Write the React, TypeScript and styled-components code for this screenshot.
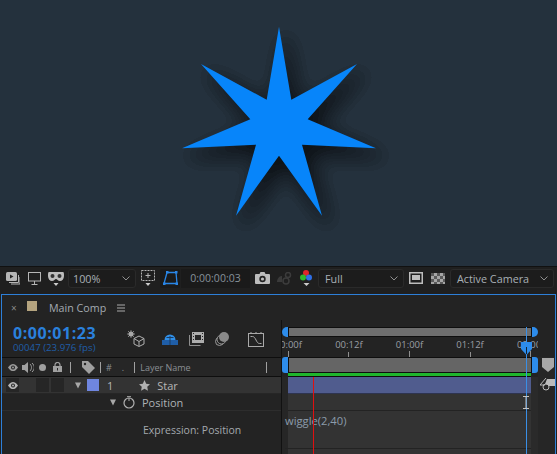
import React from "react";
import styled, { createGlobalStyle } from "styled-components";

const FONT = `"Open Sans", "Noto Sans", "Liberation Sans", sans-serif`;
const STAR =
  "279,26.7 291.3,99.7 357,64 307.7,119.3 376,148.3 302,144.7 322,215.7 279,155.7 236,215.7 256,144.7 182,148.3 250.3,119.3 201,64 266.7,99.7";

const Global = createGlobalStyle`
  html, body { margin: 0; padding: 0; background: #1f1f1f; overflow: hidden; }
  #root { width: 557px; height: 454px; overflow: hidden; }
  * { box-sizing: border-box; }
`;

const Page = styled.div`
  width: 557px;
  height: 454px;
  display: flex;
  flex-direction: column;
  background: #1f1f1f;
  font-family: ${FONT};
  font-size: 11px;
  color: #a9aeb3;
  overflow: hidden;
`;
const Viewer = styled.div`
  height: 267px;
  flex: none;
  background: #24313d;
  border-bottom: 1px solid #111;
`;
const Canvas = styled.svg`
  display: block;
`;
const Toolbar = styled.div`
  height: 27px;
  flex: none;
  display: flex;
  align-items: center;
  padding-bottom: 5px;
  background: #1f1f1f;
`;
const ToolSlot = styled.span<{ $ml: number; $w: number }>`
  flex: none;
  display: flex;
  align-items: center;
  justify-content: center;
  margin-left: ${(p) => p.$ml}px;
  width: ${(p) => p.$w}px;
`;
const Dropdown = styled.div<{ $ml: number; $w: number; $pl: number }>`
  flex: none;
  display: flex;
  align-items: center;
  justify-content: space-between;
  height: 19px;
  margin-left: ${(p) => p.$ml}px;
  width: ${(p) => p.$w}px;
  padding: 0 5px 0 ${(p) => p.$pl}px;
  border: 1px solid #2a2a2a;
  border-radius: 3px;
  background: #1c1c1c;
  font-size: 10.8px;
  color: #a8b0b6;
`;
const ActiveTool = styled.span`
  flex: none;
  display: flex;
  align-items: center;
  justify-content: center;
  width: 20px;
  height: 19px;
  margin-left: 4px;
  background: #1a1a1a;
  border-radius: 2px;
`;
const TimeBox = styled.div`
  flex: none;
  width: 69px;
  height: 19px;
  margin-left: 1px;
  display: flex;
  align-items: center;
  justify-content: center;
  background: #1a1a1a;
  font-size: 10.5px;
  color: #87929b;
`;
const Panel = styled.section`
  flex: 1;
  min-height: 0;
  margin: 0 1px;
  display: flex;
  flex-direction: column;
  border: 1px solid #2d7fd8;
  border-bottom: 0;
  background: #232323;
`;
const TabHeader = styled.div`
  height: 25px;
  flex: none;
  display: flex;
  align-items: center;
  color: #a3abb2;
`;
const CloseMark = styled.span`
  margin-left: 9px;
  width: 7px;
  font-size: 10px;
  color: #8a8a8a;
  line-height: 1;
`;
const Swatch = styled.span`
  margin-left: 9px;
  width: 10px;
  height: 10px;
  margin-top: -4px;
  background: #b5a47f;
`;
const TabTitle = styled.span`
  margin-left: 12px;
  width: 68px;
  font-size: 10.7px;
`;
const Body = styled.div`
  flex: 1;
  min-height: 0;
  display: flex;
`;
const LeftCol = styled.div`
  width: 279px;
  flex: none;
  display: flex;
  flex-direction: column;
`;
const TimeRow = styled.div`
  height: 37px;
  flex: none;
  display: flex;
  align-items: center;
`;
const TimeBlock = styled.div`
  width: 125px;
  padding-left: 11px;
  display: flex;
  flex-direction: column;
`;
const TimeCode = styled.div`
  font-size: 16px;
  line-height: 18px;
  font-weight: 700;
  color: #2a80dc;
  letter-spacing: 0.55px;
  white-space: nowrap;
`;
const TimeSub = styled.div`
  font-size: 9.7px;
  line-height: 12px;
  color: #1f5ea8;
  white-space: nowrap;
`;
const SwitchSlot = styled.span<{ $ml: number; $w: number }>`
  flex: none;
  display: flex;
  justify-content: center;
  margin-left: ${(p) => p.$ml}px;
  width: ${(p) => p.$w}px;
`;
const HeaderRow = styled.div`
  height: 20px;
  flex: none;
  display: flex;
  align-items: center;
  border-top: 1px solid #0e0e0e;
  border-bottom: 1px solid #0e0e0e;
  background: #262626;
  font-size: 9px;
  color: #8a8f94;
`;
const HeaderSep = styled.span<{ $ml: number }>`
  flex: none;
  width: 1px;
  height: 11px;
  margin-left: ${(p) => p.$ml}px;
  background: #a0a0a0;
`;
const HeaderText = styled.span<{ $ml: number }>`
  flex: none;
  margin-left: ${(p) => p.$ml}px;
  font-size: 9px;
  white-space: nowrap;
`;
const LayerRow = styled.div`
  height: 17px;
  flex: none;
  display: flex;
  align-items: center;
  background: #333;
  border-bottom: 1px solid #262626;
  color: #b6b6b6;
`;
const SwitchCell = styled.span<{ $ml: number }>`
  flex: none;
  width: 13px;
  height: 14px;
  margin-left: ${(p) => p.$ml}px;
  display: flex;
  align-items: center;
  justify-content: center;
  background: #262626;
`;
const LabelChip = styled.span`
  flex: none;
  width: 12px;
  height: 12px;
  margin-left: 6px;
  background: #6f86e0;
`;
const RowText = styled.span<{ $ml: number }>`
  flex: none;
  margin-left: ${(p) => p.$ml}px;
  white-space: nowrap;
`;
const PropRow = styled.div`
  height: 17px;
  flex: none;
  display: flex;
  align-items: center;
  border-bottom: 1px solid #2d2d2d;
  color: #aeb2b5;
`;
const ExprRow = styled.div`
  height: 38px;
  flex: none;
  display: flex;
  align-items: center;
  padding-left: 141px;
  font-size: 10.5px;
  color: #a3a9ae;
`;
const RightCol = styled.div`
  flex: 1;
  min-width: 0;
  position: relative;
  display: flex;
  flex-direction: column;
  border-left: 1px solid #111;
`;
const Nav = styled.div`
  height: 10px;
  margin-top: 7px;
  width: 256px;
  flex: none;
  display: flex;
`;
const Handle = styled.span<{ $side: "l" | "r"; $r: number }>`
  flex: none;
  width: 6px;
  background: #2d8ceb;
  border-radius: ${(p) => (p.$side === "l" ? `${p.$r}px 0 0 ${p.$r}px` : `0 ${p.$r}px ${p.$r}px 0`)};
`;
const RangeBar = styled.div<{ $tone: string }>`
  flex: 1;
  background: ${(p) => p.$tone};
  border: 1px solid #0e0e0e;
`;
const Ruler = styled.div`
  height: 20px;
  width: 256px;
  flex: none;
  display: flex;
  overflow: hidden;
`;
const RulerMark = styled.div<{ $first?: boolean }>`
  flex: none;
  width: 60.6px;
  margin-left: ${(p) => (p.$first ? "-24px" : "0")};
  display: flex;
  flex-direction: column;
  align-items: center;
`;
const RulerLabel = styled.span`
  font-size: 9.5px;
  line-height: 13px;
  margin-top: 1px;
  color: #9a9fa3;
  white-space: nowrap;
`;
const RulerTick = styled.span<{ $major?: boolean }>`
  width: 1px;
  margin-top: auto;
  height: ${(p) => (p.$major ? 8 : 5)}px;
  background: #8f8f8f;
`;
const Tracks = styled.div`
  flex: 1;
  min-height: 0;
  display: flex;
`;
const TrackStack = styled.div`
  width: 256px;
  flex: none;
  display: flex;
  flex-direction: column;
`;
const WorkArea = styled.div`
  height: 16px;
  flex: none;
  display: flex;
`;
const GreenBar = styled.div`
  height: 4px;
  flex: none;
  margin: 0 7px 0 6px;
  background: #1fb52d;
  border-bottom: 1px solid #0e0e0e;
`;
const TrackGrid = styled.div`
  flex: 1;
  display: flex;
  flex-direction: column;
  background: #333;
  border-left: 6px solid #262626;
  border-right: 7px solid #2a2a2a;
`;
const LayerBar = styled.div`
  height: 17px;
  flex: none;
  background: #505c8e;
  border-bottom: 1px solid #2e3450;
`;
const TrackLine = styled.div<{ $h: number }>`
  height: ${(p) => p.$h}px;
  flex: none;
  border-bottom: 1px solid #232323;
`;
const ExprTrack = styled.div`
  height: 38px;
  flex: none;
  margin-left: -3px;
  padding-top: 2px;
  border-bottom: 1px solid #232323;
  font-size: 11.2px;
  line-height: 16px;
  color: #8c9cab;
`;
const Rail = styled.div`
  flex: 1;
  min-width: 0;
  display: flex;
  flex-direction: column;
  align-items: center;
  gap: 6px;
  padding: 1px 0 0 2px;
  background: #262626;
`;
const RedLine = styled.div`
  position: absolute;
  left: 31px;
  top: 57px;
  bottom: 0;
  width: 1px;
  background: #e01010;
`;
const PlayLine = styled.div`
  position: absolute;
  left: 244px;
  top: 7px;
  bottom: 0;
  width: 1px;
  background: #3a8fe6;
`;
const PlayHead = styled.svg`
  position: absolute;
  left: 239px;
  top: 22px;
`;
const Cursor = styled.svg`
  position: absolute;
  left: 241px;
  top: 76px;
`;

const Chevron = () => (
  <svg width="8" height="5" viewBox="0 0 8 5"><path d="M.5.5 4 4 7.5.5" fill="none" stroke="#8f8f8f" /></svg>
);
const Tri = () => (
  <svg width="7" height="7" viewBox="0 0 7 7"><path d="M0 0h7L3.500 7z" fill="#a8a8a8" /></svg>
);
const Eye = ({ c = "#a6a6a6" }: { c?: string }) => (
  <svg width="10" height="7" viewBox="0 0 10 7">
    <path d="M0 3.500C2 .5 3.500 0 5 0s3 .5 5 3.500C8 6.500 6.500 7 5 7S2 6.500 0 3.500z" fill={c} />
    <circle cx="5" cy="3.500" r="2" fill="#262626" />
    <circle cx="5" cy="3.500" r="1" fill={c} />
  </svg>
);

const Star = () => (
  <Canvas width="557" height="266" viewBox="0 0 557 266">
    <defs>
      <filter id="sh" x="-30%" y="-30%" width="160%" height="160%" colorInterpolationFilters="sRGB">
        <feGaussianBlur stdDeviation="10" />
        <feComponentTransfer>
          <feFuncA type="discrete" tableValues="0 .07 .13 .18 .23 .28 .33 .4 .48 .55 .6" />
        </feComponentTransfer>
      </filter>
    </defs>
    <polygon
      points={STAR}
      fill="#000"
      stroke="#000"
      strokeWidth="5"
      strokeLinejoin="round"
      transform="translate(7 9)"
      filter="url(#sh)"
    />
    <polygon points={STAR} fill="#0785fa" />
  </Canvas>
);

export default function App() {
  const marks = [
    ["00:00f", true],
    ["00:12f", false],
    ["01:00f", true],
    ["01:12f", false],
    ["02:00f", true],
  ] as const;
  return (
    <Page>
      <Global />
      <Viewer>
        <Star />
      </Viewer>
      <Toolbar>
        <ToolSlot $ml={6} $w={14}>
          <svg width="14" height="13" viewBox="0 0 14 13">
            <rect x="0" y="0" width="11" height="9" rx="1.500" fill="#b5b5b5" />
            <path d="M4 2.500v4l3.500-2z" fill="#222" />
            <path d="M12.500 3v7.500H3M14 5v7H5" fill="none" stroke="#b5b5b5" />
          </svg>
        </ToolSlot>
        <ToolSlot $ml={8} $w={13}>
          <svg width="13" height="13" viewBox="0 0 13 13">
            <rect x=".5" y=".5" width="12" height="8.500" fill="none" stroke="#b5b5b5" />
            <path d="M6.500 9v3M3.500 12.500h6" stroke="#b5b5b5" fill="none" />
          </svg>
        </ToolSlot>
        <ToolSlot $ml={7} $w={16}>
          <svg width="16" height="15" viewBox="0 0 16 15">
            <path d="M1 1h14c1 0 1 2 1 4 0 3-2 5-4 5-2 0-3-2-4-2S6 10 4 10C2 10 0 8 0 5c0-2 0-4 1-4z" fill="#bdbdbd" />
            <circle cx="4.500" cy="5" r="2" fill="#333" />
            <circle cx="11.500" cy="5" r="2" fill="#333" />
            <path d="M5.500 12h5L8 15z" fill="#ccc" />
          </svg>
        </ToolSlot>
        <Dropdown $ml={4} $w={68} $pl={4}>
          100%
          <Chevron />
        </Dropdown>
        <ToolSlot $ml={4} $w={16}>
          <svg width="16" height="16" viewBox="0 0 16 16">
            <rect x="1.500" y=".5" width="13" height="10" fill="none" stroke="#b5b5b5" strokeDasharray="2 1" />
            <path d="M8 3v5M5.500 5.500h5" stroke="#b5b5b5" />
            <path d="M5.500 13h5L8 16z" fill="#ccc" />
          </svg>
        </ToolSlot>
        <ActiveTool>
          <svg width="15" height="14" viewBox="0 0 15 14">
            <path d="M4 1.500h9L14 12.500H1z" fill="none" stroke="#2a86e6" strokeWidth="1.300" />
            <rect x="3" y="0" width="2.500" height="2.500" fill="#2a86e6" />
            <rect x="12" y="0" width="2.500" height="2.500" fill="#2a86e6" />
            <rect x="0" y="11.500" width="2.500" height="2.500" fill="#2a86e6" />
            <rect x="12.500" y="11.500" width="2.500" height="2.500" fill="#2a86e6" />
          </svg>
        </ActiveTool>
        <TimeBox>0:00:00:03</TimeBox>
        <ToolSlot $ml={5} $w={15}>
          <svg width="15" height="12" viewBox="0 0 15 12">
            <path d="M1 2h3.500L5.500 0h4l1 2H14a1 1 0 0 1 1 1v8a1 1 0 0 1-1 1H1a1 1 0 0 1-1-1V3a1 1 0 0 1 1-1z" fill="#bdbdbd" />
            <circle cx="7.500" cy="7" r="3.200" fill="#222" />
            <circle cx="7.500" cy="7" r="1.600" fill="#bdbdbd" />
          </svg>
        </ToolSlot>
        <ToolSlot $ml={7} $w={15}>
          <svg width="15" height="13" viewBox="0 0 15 13">
            <circle cx="11" cy="3" r="2.500" fill="none" stroke="#3c3c3c" strokeWidth="1.500" />
            <circle cx="9" cy="9" r="3" fill="none" stroke="#3c3c3c" strokeWidth="1.500" />
            <path d="M0 9c1-4 3-5 5-5v6H0z" fill="#3a3a3a" />
          </svg>
        </ToolSlot>
        <ToolSlot $ml={8} $w={12}>
          <svg width="12" height="17" viewBox="0 0 12 17">
            <circle cx="6" cy="3" r="3" fill="#e0252c" />
            <circle cx="3" cy="7.500" r="3" fill="#2fb62f" />
            <circle cx="9" cy="7.500" r="3" fill="#2f6fe6" />
            <path d="M3.500 13h6L6.500 16z" fill="#ccc" />
          </svg>
        </ToolSlot>
        <Dropdown $ml={6} $w={86} $pl={6}>
          Full
          <Chevron />
        </Dropdown>
        <ToolSlot $ml={5} $w={14}>
          <svg width="14" height="12" viewBox="0 0 14 12">
            <rect x=".75" y=".75" width="12.500" height="10.500" fill="none" stroke="#bdbdbd" strokeWidth="1.500" />
            <rect x="3" y="3" width="8" height="5" fill="#bdbdbd" />
          </svg>
        </ToolSlot>
        <ToolSlot $ml={8} $w={14}>
          <svg width="14" height="11" viewBox="0 0 14 11">
            <rect width="14" height="11" fill="#a5a5a5" />
            <path d="M0 0h3v3H0zM6 0h3v3H6zM3 3h3v3H3zM9 3h3v3H9zM0 6h3v3H0zM6 6h3v3H6zM3 9h3v2H3zM9 9h3v2H9zM12 0h2v3h-2zM12 6h2v3h-2z" fill="#5a5a5a" />
          </svg>
        </ToolSlot>
        <Dropdown $ml={5} $w={104} $pl={6}>
          Active Camera
          <Chevron />
        </Dropdown>
      </Toolbar>
      <Panel>
        <TabHeader>
          <CloseMark>×</CloseMark>
          <Swatch />
          <TabTitle>Main Comp</TabTitle>
          <svg width="8" height="8" viewBox="0 0 8 8">
            <path d="M0 1h8M0 4h8M0 7h8" stroke="#aaa" />
          </svg>
        </TabHeader>
        <Body>
          <LeftCol>
            <TimeRow>
              <TimeBlock>
                <TimeCode>0:00:01:23</TimeCode>
                <TimeSub>00047 (23.976 fps)</TimeSub>
              </TimeBlock>
              <SwitchSlot $ml={0} $w={18}>
                <svg width="18" height="17" viewBox="0 0 18 17">
                  <circle cx="4" cy="4" r="2.500" fill="#aaa" />
                  <path d="M4 0v8M0 4h8M1 1l6 6M7 1 1 7" stroke="#aaa" strokeWidth=".7" />
                  <path d="M12 6l5 2.500v5.500l-5 2.500-5-2.500V8.500zM12 11.500V16M7 8.500l5 3 5-3" fill="none" stroke="#b0b0b0" />
                </svg>
              </SwitchSlot>
              <SwitchSlot $ml={17} $w={16}>
                <svg width="16" height="13" viewBox="0 0 16 13">
                  <path d="M0 8h16v5H0z" fill="#1f5ea8" />
                  <path d="M2.500 8a5.500 5.500 0 0 1 11 0z" fill="#2f8fe8" />
                  <path d="M7.500 4h1v9h-1z" fill="#1c3c60" />
                  <path d="M4.500 5h7v1h-7z" fill="#1c3c60" />
                </svg>
              </SwitchSlot>
              <SwitchSlot $ml={11} $w={15}>
                <svg width="15" height="14" viewBox="0 0 15 14">
                  <path d="M3 0h12v11H3z" fill="#adadad" />
                  <path d="M6 3h6v5H6zM4 1h1v1H4zM4 4h1v1H4zM4 7h1v1H4zM13 1h1v1h-1zM13 4h1v1h-1zM13 7h1v1h-1z" fill="#262626" />
                  <path d="M.5 3v10.500h11" fill="none" stroke="#8f8f8f" />
                </svg>
              </SwitchSlot>
              <SwitchSlot $ml={11} $w={14}>
                <svg width="14" height="14" viewBox="0 0 14 14">
                  <circle cx="4.500" cy="9.500" r="4" fill="none" stroke="#999" />
                  <circle cx="6.500" cy="7.500" r="4.500" fill="#232323" stroke="#999" />
                  <circle cx="9" cy="5" r="5" fill="#8a8a8a" />
                </svg>
              </SwitchSlot>
              <SwitchSlot $ml={19} $w={16}>
                <svg width="16" height="16" viewBox="0 0 16 16">
                  <rect x=".5" y="2.500" width="15" height="13" fill="none" stroke="#aaa" />
                  <path d="M3 1v2M8 1v2M13 1v2" stroke="#aaa" />
                  <path d="M2.500 5.500h2C8 5.500 8 12.500 11.500 12.500h2" fill="none" stroke="#aaa" />
                </svg>
              </SwitchSlot>
            </TimeRow>
            <HeaderRow>
              <SwitchSlot $ml={6} $w={10}>
                <Eye c="#9a9a9a" />
              </SwitchSlot>
              <SwitchSlot $ml={4} $w={12}>
                <svg width="12" height="11" viewBox="0 0 12 11">
                  <path d="M0 3h2.500L6 0v11L2.500 8H0z" fill="#a0a0a0" />
                  <path d="M8 2c2 2 2 5 0 7M10 1c3 3 3 6 0 9" fill="none" stroke="#a0a0a0" />
                </svg>
              </SwitchSlot>
              <SwitchSlot $ml={5} $w={7}>
                <svg width="7" height="7"><circle cx="3.500" cy="3.500" r="3.500" fill="#a0a0a0" /></svg>
              </SwitchSlot>
              <SwitchSlot $ml={7} $w={9}>
                <svg width="9" height="10" viewBox="0 0 9 10">
                  <path d="M2 4.500V3a2.500 2.500 0 0 1 5 0v1.500" fill="none" stroke="#a0a0a0" strokeWidth="1.200" />
                  <rect y="4" width="9" height="6" fill="#a0a0a0" />
                  <rect x="4" y="6" width="1" height="2.500" fill="#262626" />
                </svg>
              </SwitchSlot>
              <HeaderSep $ml={8} />
              <SwitchSlot $ml={11} $w={13}>
                <svg width="13" height="13" viewBox="0 0 13 13">
                  <path d="M0 0h6l7 7-6 6-7-7z" fill="#a0a0a0" />
                  <circle cx="3" cy="3" r="1.200" fill="#262626" />
                </svg>
              </SwitchSlot>
              <HeaderSep $ml={5} />
              <HeaderText $ml={5}>#</HeaderText>
              <HeaderText $ml={10}>.</HeaderText>
              <HeaderSep $ml={10} />
              <HeaderText $ml={5}>Layer Name</HeaderText>
              <HeaderSep $ml={75} />
            </HeaderRow>
            <LayerRow>
              <SwitchCell $ml={4}>
                <Eye c="#b5b5b5" />
              </SwitchCell>
              <SwitchCell $ml={17} />
              <SwitchCell $ml={2} />
              <SwitchSlot $ml={11} $w={6}>
                <Tri />
              </SwitchSlot>
              <LabelChip />
              <RowText $ml={8}>1</RowText>
              <SwitchSlot $ml={26} $w={11}>
                <svg width="11" height="11" viewBox="0 0 24 24">
                  <path d="M12 0l3.700 8 8.300 1-6 5.800 1.500 8.700L12 19.200 4.500 23.500 6 14.800 0 9l8.300-1z" fill="#b0b0b0" />
                </svg>
              </SwitchSlot>
              <RowText $ml={7}>Star</RowText>
            </LayerRow>
            <PropRow>
              <SwitchSlot $ml={108} $w={6}>
                <Tri />
              </SwitchSlot>
              <SwitchSlot $ml={7} $w={12}>
                <svg width="12" height="13" viewBox="0 0 12 13">
                  <circle cx="6" cy="7" r="5" fill="none" stroke="#b0b0b0" strokeWidth="1.200" />
                  <path d="M4 .7h4M6 2v3" stroke="#b0b0b0" />
                </svg>
              </SwitchSlot>
              <RowText $ml={7}>Position</RowText>
            </PropRow>
            <ExprRow>Expression: Position</ExprRow>
          </LeftCol>
          <RightCol>
            <Nav>
              <Handle $side="l" $r={5} />
              <RangeBar $tone="#6e6e6e" />
              <Handle $side="r" $r={5} />
            </Nav>
            <Ruler>
              {marks.map(([t, major], i) => (
                <RulerMark key={t} $first={i === 0}>
                  <RulerLabel>{t}</RulerLabel>
                  <RulerTick $major={major} />
                </RulerMark>
              ))}
            </Ruler>
            <Tracks>
              <TrackStack>
                <WorkArea>
                  <Handle $side="l" $r={3} />
                  <RangeBar $tone="#656565" />
                  <Handle $side="r" $r={3} />
                </WorkArea>
                <GreenBar />
                <TrackGrid>
                  <LayerBar />
                  <TrackLine $h={17} />
                  <ExprTrack>wiggle(2,40)</ExprTrack>
                </TrackGrid>
              </TrackStack>
              <Rail>
                <svg width="12" height="14" viewBox="0 0 12 14">
                  <path d="M0 0h12v9l-6 5-6-5z" fill="#a8a8a8" />
                </svg>
                <svg width="15" height="13" viewBox="0 0 15 13">
                  <path d="M6 0 0 7h5" fill="none" stroke="#bbb" />
                  <path d="M7 1h8v7H9a4 4 0 0 0-4-2z" fill="#bbb" />
                  <circle cx="6" cy="9" r="3" fill="none" stroke="#bbb" />
                </svg>
              </Rail>
            </Tracks>
            <RedLine />
            <PlayLine />
            <PlayHead width="11" height="13" viewBox="0 0 11 13">
              <path d="M0 0h11v7l-5.500 6L0 7z" fill="#2d8ceb" />
              <path d="M5.500 5v7" stroke="#123" />
            </PlayHead>
            <Cursor width="6" height="13" viewBox="0 0 6 13">
              <path d="M0 .5h6M0 12.500h6M3 0v13" stroke="#c4c4c4" fill="none" />
            </Cursor>
          </RightCol>
        </Body>
      </Panel>
    </Page>
  );
}
